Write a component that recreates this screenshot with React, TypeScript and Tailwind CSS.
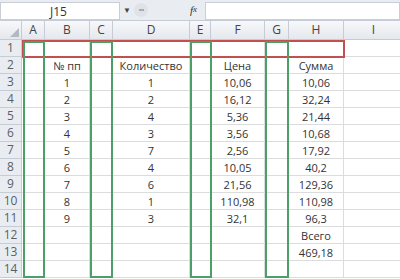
import React from 'react';

const cols = [
  { key: 'A', w: 'w-[23px]' },
  { key: 'B', w: 'w-[45px]' },
  { key: 'C', w: 'w-[23px]' },
  { key: 'D', w: 'w-[77px]' },
  { key: 'E', w: 'w-[21px]' },
  { key: 'F', w: 'w-[54px]' },
  { key: 'G', w: 'w-[24px]' },
  { key: 'H', w: 'w-[55px]' },
  { key: 'I', w: 'w-[60px]' },
];

const rows: Record<string, string>[] = [
  {},
  { B: '№ пп', D: 'Количество', F: 'Цена', H: 'Сумма' },
  { B: '1', D: '1', F: '10,06', H: '10,06' },
  { B: '2', D: '2', F: '16,12', H: '32,24' },
  { B: '3', D: '4', F: '5,36', H: '21,44' },
  { B: '4', D: '3', F: '3,56', H: '10,68' },
  { B: '5', D: '7', F: '2,56', H: '17,92' },
  { B: '6', D: '4', F: '10,05', H: '40,2' },
  { B: '7', D: '6', F: '21,56', H: '129,36' },
  { B: '8', D: '1', F: '110,98', H: '110,98' },
  { B: '9', D: '3', F: '32,1', H: '96,3' },
  { H: 'Всего' },
  { H: '469,18' },
  {},
];

function FormulaBar() {
  return (
    <div className="flex h-[21px] items-stretch border-b border-[#c5ccd6] bg-[#e9edf2]">
      <div className="mt-[2px] w-[120px] shrink-0 border border-[#c9ced6] bg-white pl-[49px] text-[12px] leading-[17px] text-[#333]">
        J15
      </div>
      <div className="flex w-[14px] items-center justify-center text-[8px] text-[#444]">▼</div>
      <div className="my-[3px] flex w-[14px] items-center justify-center rounded-full bg-[#dfe3e8]">
        <div className="h-[2px] w-[5px] bg-[#a8adb5]" />
      </div>
      <div className="flex flex-1 items-center justify-end pr-[8px] font-['Liberation_Serif',serif] text-[11px] italic text-[#333]">
        f<span className="text-[9px]">x</span>
      </div>
      <div className="mt-[2px] w-[195px] border border-[#c9ced6] bg-white" />
    </div>
  );
}

export default function App() {
  return (
    <div className="relative h-[279px] w-[400px] overflow-hidden bg-white font-['Open_Sans','Liberation_Sans',sans-serif] text-[11px] text-[#333]">
      <FormulaBar />
      <div className="flex h-[19px] bg-gradient-to-b from-[#f7f8fa] to-[#e3e7ec] text-[12px] text-[#444]">
        <div className="flex w-[22px] shrink-0 items-end justify-end border-r border-b border-[#c5ccd6] p-[2px]">
          <svg width="9" height="9" viewBox="0 0 9 9">
            <path d="M9 0 L9 9 L0 9 Z" fill="#b3b9c1" />
          </svg>
        </div>
        {cols.map((c) => (
          <div
            key={c.key}
            className={`${c.w} flex shrink-0 items-center justify-center border-r border-b border-[#c5ccd6]`}
          >
            {c.key}
          </div>
        ))}
      </div>
      {rows.map((r, i) => (
        <div key={i} className="flex h-[17px]">
          <div className="flex w-[22px] shrink-0 items-center justify-center border-r border-b border-[#c5ccd6] bg-[#e9edf2] text-[12px] text-[#5a5f66]">
            {i + 1}
          </div>
          {cols.map((c) => (
            <div
              key={c.key}
              className={`${c.w} flex shrink-0 items-center justify-center border-r border-b border-[#dadcdd] leading-none`}
            >
              {r[c.key] ?? ''}
            </div>
          ))}
        </div>
      ))}
      <div className="absolute top-[40px] left-[22px] h-[18px] w-[323px] border-2 border-[#c2504f]" />
      <div className="absolute top-[41px] left-[23px] h-[237px] w-[22px] border-2 border-[#4c9f67]" />
      <div className="absolute top-[41px] left-[90px] h-[237px] w-[23px] border-2 border-[#4c9f67]" />
      <div className="absolute top-[41px] left-[190px] h-[237px] w-[22px] border-2 border-[#4c9f67]" />
      <div className="absolute top-[41px] left-[265px] h-[237px] w-[24px] border-2 border-[#4c9f67]" />
    </div>
  );
}
